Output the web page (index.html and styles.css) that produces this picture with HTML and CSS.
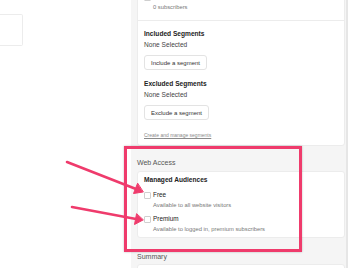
FILE: index.html
```html
<!DOCTYPE html>
<html lang="en">
<head>
    <meta charset="UTF-8">
    <meta name="viewport" content="width=device-width, initial-scale=1.0">
    <title>Post settings - Audience</title>
    <link rel="stylesheet" href="styles.css">
</head>
<body>
    <div class="page">
        <!-- Colonna sinistra (editor) -->
        <div class="side">
            <div class="side-box"></div>
        </div>

        <!-- Pannello impostazioni -->
        <div class="panel">
            <div class="card card-audience">
                <div class="section">
                    <div class="check-row"><span class="box"></span><span class="label">All subscribers</span></div>
                    <div class="desc">0 subscribers</div>
                </div>
                <div class="section section-segments">
                    <div class="title">Included Segments</div>
                    <div class="muted">None Selected</div>
                    <button class="btn">Include a segment</button>
                    <div class="title title-gap">Excluded Segments</div>
                    <div class="muted">None Selected</div>
                    <button class="btn">Exclude a segment</button>
                    <a class="link" href="#">Create and manage segments</a>
                </div>
            </div>

            <div class="heading">Web Access</div>
            <div class="card card-web">
                <div class="title">Managed Audiences</div>
                <div class="check-row first"><span class="box"></span><span class="label">Free</span></div>
                <div class="desc">Available to all website visitors</div>
                <div class="check-row"><span class="box"></span><span class="label">Premium</span></div>
                <div class="desc">Available to logged in, premium subscribers</div>
            </div>

            <div class="heading heading-summary">Summary</div>
            <div class="card card-summary"></div>
        </div>

        <!-- Annotazioni sovrapposte -->
        <div class="highlight"></div>
        <svg class="arrows" width="348" height="268" viewBox="0 0 348 268">
            <g stroke="#ef3b6c" stroke-width="2.6" stroke-linecap="round" fill="#ef3b6c">
                <line x1="67" y1="162" x2="136" y2="189"/>
                <polygon points="143,192 133.5,193.5 137.5,183.5" stroke-width="1" stroke-linejoin="round"/>
                <line x1="72" y1="207" x2="136" y2="219"/>
                <polygon points="143,220 134.5,224.5 136.5,214" stroke-width="1" stroke-linejoin="round"/>
            </g>
        </svg>
    </div>
</body>
</html>
```

FILE: styles.css
```css
* {
    box-sizing: border-box;
}

body {
    margin: 0;
    background-color: #fff;
    font-family: 'Liberation Sans', Arial, sans-serif;
    font-size: 6px;
    line-height: 10px;
    color: #333;
}

.page {
    position: relative;
    display: flex;
    width: 348px;
    height: 268px;
    overflow: hidden;
}

.side {
    width: 131px;
    flex-shrink: 0;
    background-color: #fff;
}

.side-box {
    margin-top: 14px;
    width: 23px;
    height: 32px;
    border: 1px solid #ececec;
    border-left: none;
    border-radius: 0 2px 2px 0;
}

.panel {
    width: 217px;
    flex-shrink: 0;
    background-color: #f5f5f5;
    padding: 0 1px 0 6px;
    border-right: 2px solid #e6e6e6;
}

.card {
    background-color: #fff;
    border: 1px solid #ececec;
    border-radius: 3px;
}

.card-audience {
    margin-top: -17px;
}

.section {
    padding: 8px 6px 8px;
}

.section-segments {
    border-top: 1px solid #ececec;
    padding: 8px 6px 5px;
}

.title {
    font-size: 6.6px;
    font-weight: bold;
    color: #222;
}

.title-gap {
    margin-top: 9px;
}

.muted {
    margin-top: 1px;
    font-size: 6.6px;
    color: #444;
}

.btn {
    display: block;
    margin-top: 5px;
    height: 15px;
    padding: 0 6px;
    font-family: inherit;
    font-size: 6px;
    color: #333;
    background-color: #fff;
    border: 1px solid #e3e3e3;
    border-radius: 3px;
}

.link {
    display: block;
    margin-top: 10px;
    color: #8a8a8a;
    font-size: 5px;
    text-decoration: underline;
}

.check-row {
    display: flex;
    align-items: center;
}

.check-row .box {
    width: 7px;
    height: 7px;
    margin-right: 2px;
    border: 1px solid #cfcfcf;
    border-radius: 1px;
    background-color: #fff;
}

.check-row .label {
    font-size: 6.4px;
    color: #222;
}

.desc {
    padding-left: 9px;
    font-size: 5.8px;
    color: #777;
}

.heading {
    margin-top: 12px;
    font-size: 7px;
    color: #555;
}

.card-web {
    margin-top: 3px;
    padding: 3px 6px 3px;
}

.card-web .check-row {
    margin-top: 4px;
}

.card-web .check-row.first {
    margin-top: 5px;
}

.heading-summary {
    margin-top: 14px;
}

.card-summary {
    margin-top: 2px;
    height: 30px;
}

/* Riquadro di evidenziazione */
.highlight {
    position: absolute;
    left: 124px;
    top: 146px;
    width: 178px;
    height: 106px;
    border: 3px solid #ef3b6c;
    box-shadow: 0 0 2px rgba(0, 0, 0, 0.25);
}

.arrows {
    position: absolute;
    left: 0;
    top: 0;
}
```
